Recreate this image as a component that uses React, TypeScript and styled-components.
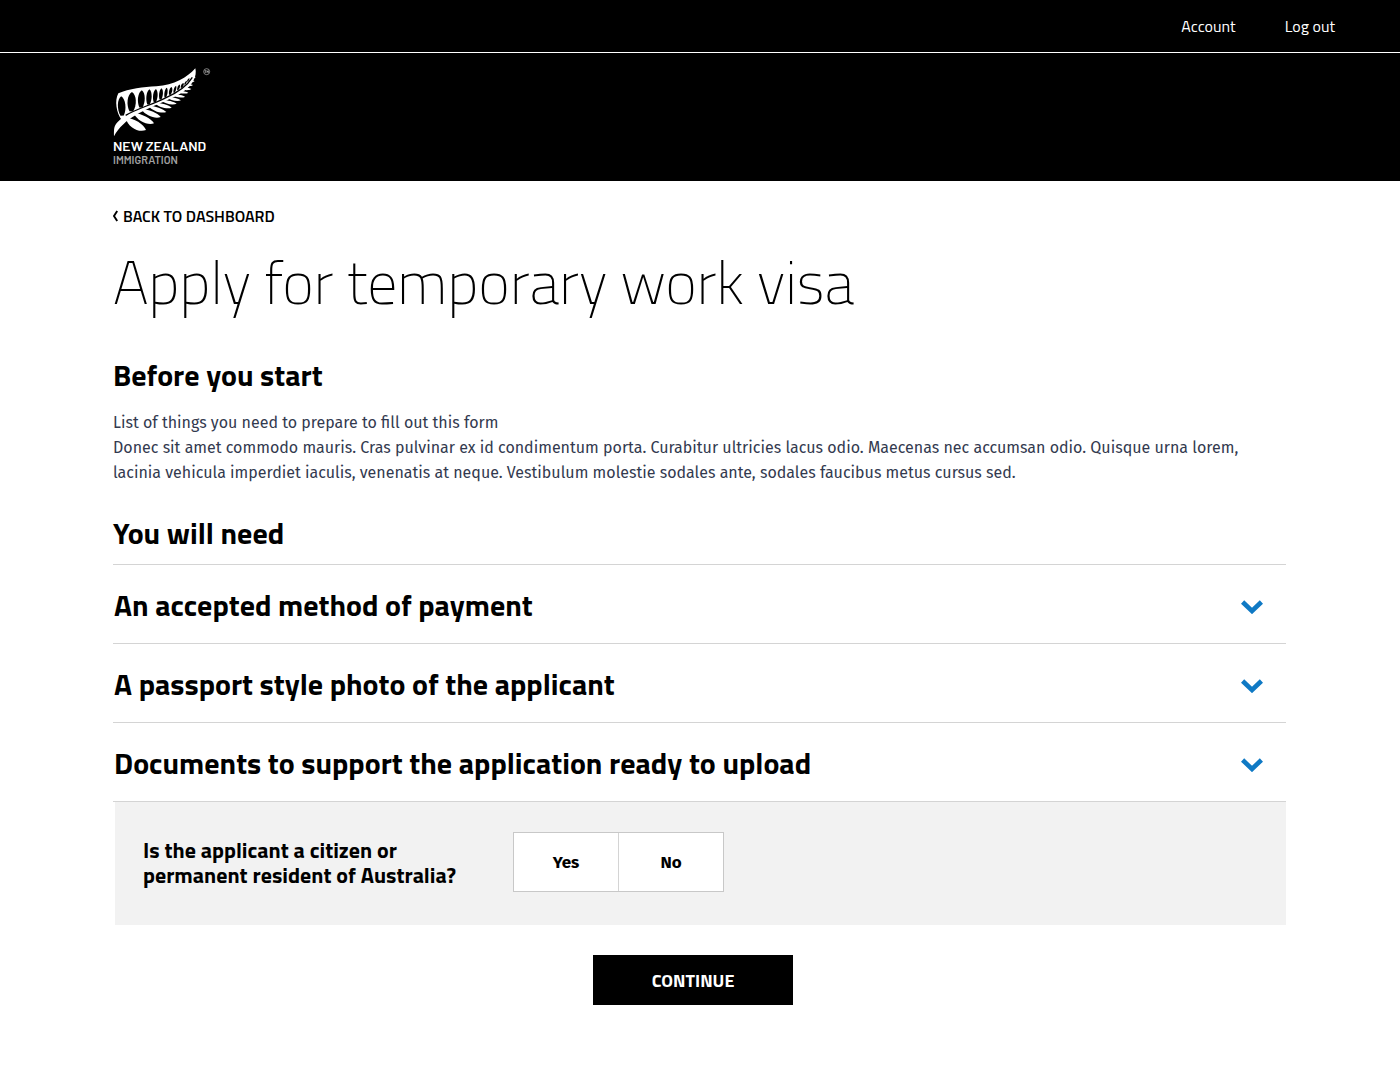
import React, { useState } from "react";
import styled, { createGlobalStyle } from "styled-components";

const heading = `"Titillium Web", "Noto Sans", "Open Sans", sans-serif`;
const body = `"Fira Sans", "Noto Sans", sans-serif`;

const GlobalStyle = createGlobalStyle`
  *, *::before, *::after { box-sizing: border-box; }
  body { margin: 0; background: #fff; color: #000; font-family: ${body}; }
  h1, h2, h3, p { margin: 0; }
  button { font: inherit; color: inherit; cursor: pointer; }
`;

const Header = styled.header`
  background: #000;
  color: #fff;
`;

const UtilityNav = styled.nav`
  display: flex;
  justify-content: flex-end;
  gap: 49px;
  padding: 14px 65px;
  border-bottom: 1px solid #fff;
`;

const UtilityLink = styled.a`
  color: #fff;
  font: 400 16px/24px ${heading};
  text-decoration: none;
`;

const Container = styled.div`
  max-width: 1400px;
  margin: 0 auto;
  padding: 0 114px 0 113px;
`;

const Brand = styled.a`
  display: inline-flex;
  flex-direction: column;
  padding: 14px 0 14px;
  color: #fff;
  text-decoration: none;
  vertical-align: top;
`;

const BrandName = styled.span<{ $muted?: boolean }>`
  margin-top: ${(p) => (p.$muted ? 0 : 2)}px;
  font-family: Barlow, ${heading};
  font-weight: 600;
  font-size: ${(p) => (p.$muted ? 11 : 14)}px;
  line-height: 14px;
  color: ${(p) => (p.$muted ? "#a0a0a0" : "#fff")};
`;

const BackLink = styled.a`
  display: inline-flex;
  align-items: center;
  gap: 5px;
  margin-top: 23px;
  color: #000;
  font: 600 16px/24px ${heading};
  text-decoration: none;
`;

const PageTitle = styled.h1`
  margin-top: 14px;
  font: 200 60px/80px ${heading};
`;

const SectionTitle = styled.h2`
  font: 700 30px/40px ${heading};
`;

const Intro = styled.section`
  margin-top: 33px;
`;

const Copy = styled.p`
  margin: 15px 0 28px;
  color: #333a4f;
  font: 400 16px/25px ${body};
`;

const Accordion = styled.ul`
  list-style: none;
  margin: 11px 0 0;
  padding: 0;
  border-top: 1px solid #d4d4d4;
`;

const AccordionItem = styled.li`
  border-bottom: 1px solid #d4d4d4;
`;

const AccordionButton = styled.button`
  display: flex;
  align-items: center;
  justify-content: space-between;
  width: 100%;
  padding: 20px 23px 18px 1px;
  border: 0;
  background: none;
  text-align: left;
  font: 700 30px/40px ${heading};

  svg {
    margin-top: 4px;
  }
`;

const Question = styled.fieldset`
  display: flex;
  align-items: center;
  gap: 30px;
  margin: 0 0 0 2px;
  padding: 30px 28px 33px;
  border: 0;
  background: #f2f2f2;
`;

const QuestionText = styled.div`
  width: 340px;
  padding-top: 2px;
  font: 700 22px/25px ${heading};
`;

const Choices = styled.div`
  display: flex;
  width: 211px;
  border: 1px solid #c8c8c8;
  background: #fff;
`;

const Choice = styled.button<{ $selected: boolean }>`
  flex: 1;
  height: 58px;
  padding: 1px 0 0;
  border: 0;
  background: ${(p) => (p.$selected ? "#dcecf8" : "#fff")};
  font: 700 17px/24px ${body};

  & + & {
    border-left: 1px solid #d4d4d4;
  }
`;

const Actions = styled.div`
  display: flex;
  justify-content: center;
  padding: 30px 13px 40px 0;
`;

const ContinueButton = styled.button`
  width: 200px;
  height: 50px;
  padding: 2px 0 0;
  border: 0;
  background: #000;
  color: #fff;
  font: 700 18px/24px ${heading};
`;

/* Gaps between the upper leaves: centre, half width, half height, rotation. */
const holes = [
  [50, 138, 10, 29, -3],
  [80, 125, 11, 29, 2],
  [109, 117, 9, 26, 3],
  [132, 111, 7, 23, 4],
  [151, 107, 6, 20, 5],
  [168, 102, 5, 17, 6],
  [183, 98, 4, 15, 9],
  [197, 93, 4, 12, 13],
  [210, 88, 3, 11, 17],
  [221, 82, 3, 9, 21],
  [232, 76, 3, 8, 26],
  [242, 68, 2, 7, 30],
  [250, 60, 2, 6, 34],
];

/* Each lower leaf runs from its base on the stem to its tip, followed by its thickness. */
const leaves = [
  [62, 173, 123, 210, 17],
  [86, 159, 147, 190, 13],
  [109, 147, 167, 171, 11],
  [130, 137, 184, 156, 9],
  [149, 128, 200, 143, 8],
  [167, 120, 215, 131, 7],
  [184, 111, 228, 121, 6],
  [199, 103, 240, 110, 6],
  [213, 94, 250, 98, 5],
  [226, 85, 259, 87, 5],
  [238, 75, 264, 75, 4],
  [248, 64, 269, 63, 4],
  [257, 53, 272, 51, 3],
];

const leafPath = ([x1, y1, x2, y2, t]: number[]) => {
  const dx = x2 - x1;
  const dy = y2 - y1;
  const len = Math.hypot(dx, dy);
  const nx = (-dy / len) * t;
  const ny = (dx / len) * t;
  const at = (along: number, out: number) => `${x1 + dx * along + nx * out} ${y1 + dy * along + ny * out}`;
  return `M${at(0, 0)}C${at(0.3, -0.7)} ${at(0.8, -0.7)} ${at(1, 0)}C${at(0.8, 1.1)} ${at(0.3, 1.3)} ${at(0, 0)}Z`;
};

const holePath = (w: number, h: number) =>
  `M0 ${-h}C${w * 1.3} ${-h * 0.7} ${w * 1.5} ${h / 3} ${w / 2} ${h}L${-w / 2} ${h}C${-w * 1.5} ${h / 3} ${-w * 1.3} ${-h * 0.7} 0 ${-h}Z`;

function Fern() {
  return (
    <svg width="98" height="70" viewBox="24 21 294 210" aria-hidden="true">
      <path
        fill="#fff"
        d="M50 180C34 158 28 122 40 100C72 86 116 81 154 79C208 75 246 53 271 25C277 50 262 75 236 94C190 126 110 139 50 180Z"
      />
      {holes.map(([x, y, w, h, r]) => (
        <path key={x} d={holePath(w, h)} transform={`translate(${x} ${y}) rotate(${r})`} />
      ))}
      <path
        fill="#fff"
        d="M27 229C27 208 26 198 38 186C62 160 120 141 164 121C210 103 246 84 265 48C256 89 222 105 176 125C120 149 56 174 27 229Z"
      />
      {leaves.map((leaf) => (
        <path key={leaf[0]} fill="#fff" d={leafPath(leaf)} />
      ))}
      <path
        fill="none"
        stroke="#000"
        strokeWidth="4"
        d="M62 166C94 147 140 134 179 115C218 98 245 80 262 52"
      />
      <circle cx="305" cy="35" r="9" fill="none" stroke="#bbb" strokeWidth="2" />
      <path fill="none" stroke="#bbb" strokeWidth="2" d="M299 32h5M301 32v7M306 39v-7l2 4l2-4v7" />
    </svg>
  );
}

function Chevron() {
  return (
    <svg width="22" height="14" viewBox="0 0 22 14" aria-hidden="true">
      <path d="M1.6 2l9.4 9 9.4-9" fill="none" stroke="#0f79c4" strokeWidth="4.6" />
    </svg>
  );
}

const requirements = [
  "An accepted method of payment",
  "A passport style photo of the applicant",
  "Documents to support the application ready to upload",
];

export default function App() {
  const [answer, setAnswer] = useState<string | null>(null);

  return (
    <>
      <GlobalStyle />
      <Header>
        <UtilityNav aria-label="Account">
          <UtilityLink href="#account">Account</UtilityLink>
          <UtilityLink href="#logout">Log out</UtilityLink>
        </UtilityNav>
        <Container>
          <Brand href="#home">
            <Fern />
            <BrandName>NEW ZEALAND</BrandName>
            <BrandName $muted>IMMIGRATION</BrandName>
          </Brand>
        </Container>
      </Header>
      <Container as="main">
        <BackLink href="#dashboard">
          <svg width="5" height="12" viewBox="0 0 5 12" aria-hidden="true">
            <path d="M4.2 1L1 6l3.2 5" fill="none" stroke="#000" strokeWidth="1.9" />
          </svg>
          BACK TO DASHBOARD
        </BackLink>
        <PageTitle>Apply for temporary work visa</PageTitle>
        <Intro>
          <SectionTitle>Before you start</SectionTitle>
          <Copy>
            List of things you need to prepare to fill out this form
            <br />
            Donec sit amet commodo mauris. Cras pulvinar ex id condimentum porta. Curabitur ultricies lacus odio.
            Maecenas nec accumsan odio. Quisque urna lorem, lacinia vehicula imperdiet iaculis, venenatis at neque.
            Vestibulum molestie sodales ante, sodales faucibus metus cursus sed.
          </Copy>
        </Intro>
        <SectionTitle>You will need</SectionTitle>
        <Accordion>
          {requirements.map((title) => (
            <AccordionItem key={title}>
              <AccordionButton type="button" aria-expanded={false}>
                {title}
                <Chevron />
              </AccordionButton>
            </AccordionItem>
          ))}
        </Accordion>
        <Question aria-labelledby="citizen-question">
          <QuestionText id="citizen-question">
            Is the applicant a citizen or permanent resident of Australia?
          </QuestionText>
          <Choices>
            {["Yes", "No"].map((option) => (
              <Choice
                key={option}
                type="button"
                $selected={answer === option}
                aria-pressed={answer === option}
                onClick={() => setAnswer(option)}
              >
                {option}
              </Choice>
            ))}
          </Choices>
        </Question>
        <Actions>
          <ContinueButton type="button">CONTINUE</ContinueButton>
        </Actions>
      </Container>
    </>
  );
}
